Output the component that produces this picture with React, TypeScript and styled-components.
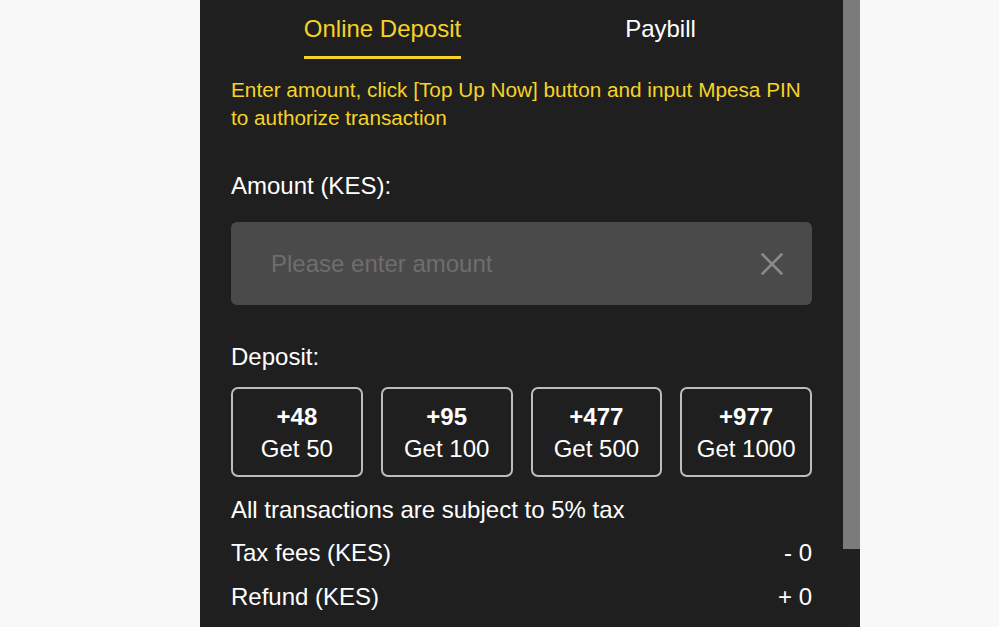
import React from "react";
import styled, { createGlobalStyle } from "styled-components";

const GlobalStyle = createGlobalStyle`
  html, body {
    margin: 0;
    padding: 0;
    background: #f8f8f8;
    font-family: "Liberation Sans", Arial, Helvetica, sans-serif;
  }
  * { box-sizing: border-box; }
`;

const Page = styled.div`
  width: 999px;
  height: 627px;
  overflow: hidden;
  padding-left: 200px;
`;

const Panel = styled.div`
  width: 660px;
  height: 627px;
  background: #1f1f1f;
  display: flex;
  flex-direction: row;
  overflow: hidden;
`;

const Content = styled.div`
  width: 643px;
  padding: 0 31px;
  display: flex;
  flex-direction: column;
  color: #ffffff;
`;

const ScrollTrack = styled.div`
  width: 17px;
  height: 100%;
  background: #202020;
  display: flex;
  flex-direction: column;
`;

const ScrollThumb = styled.div`
  width: 17px;
  height: 549px;
  background: #7b7b7b;
`;

const Tabs = styled.div`
  display: grid;
  grid-template-columns: 1fr 1fr;
  padding: 0 12.5px;
`;

const Tab = styled.div`
  display: flex;
  justify-content: center;
  padding-top: 15px;
`;

const TabLabel = styled.span<{ $active?: boolean }>`
  display: inline-block;
  font-size: 24px;
  line-height: 28px;
  padding-bottom: 13px;
  color: ${(p) => (p.$active ? "#f5d328" : "#ffffff")};
  border-bottom: 3px solid ${(p) => (p.$active ? "#f5d328" : "transparent")};
`;

const Notice = styled.p`
  margin: 17px 0 0;
  font-size: 20.75px;
  line-height: 27.5px;
  color: #f5d328;
`;

const Label = styled.div<{ $top: number }>`
  margin-top: ${(p) => p.$top}px;
  font-size: 24px;
  line-height: 28px;
  color: #ffffff;
`;

const InputBox = styled.div`
  margin-top: 22.3px;
  height: 83px;
  border-radius: 6px;
  background: #4a4a4a;
  display: flex;
  align-items: center;
  padding: 1px 29px 0 40px;
`;

const AmountInput = styled.input`
  flex: 1;
  min-width: 0;
  border: none;
  outline: none;
  background: transparent;
  font-family: "Liberation Sans", Arial, Helvetica, sans-serif;
  font-size: 24px;
  color: #ffffff;
  padding: 0;
  &::placeholder {
    color: #6e6e6e;
  }
`;

const ClearButton = styled.button`
  border: none;
  background: transparent;
  padding: 0;
  width: 22px;
  height: 22px;
  display: flex;
  align-items: center;
  justify-content: center;
  cursor: pointer;
`;

const Presets = styled.div`
  margin-top: 16px;
  display: grid;
  grid-template-columns: repeat(4, 1fr);
  gap: 18px;
`;

const Preset = styled.button`
  height: 90px;
  border: 2px solid #bdbdbd;
  border-radius: 7px;
  background: transparent;
  color: #ffffff;
  font-family: "Liberation Sans", Arial, Helvetica, sans-serif;
  display: flex;
  flex-direction: column;
  align-items: center;
  justify-content: center;
  padding: 1px 0 0;
  cursor: pointer;
`;

const PresetPay = styled.span`
  font-size: 24px;
  line-height: 32px;
  font-weight: 700;
`;

const PresetGet = styled.span`
  font-size: 24px;
  line-height: 32px;
`;

const Summary = styled.div`
  margin-top: 18.5px;
  display: flex;
  flex-direction: column;
  gap: 15.4px;
`;

const SummaryRow = styled.div`
  display: flex;
  justify-content: space-between;
  font-size: 24px;
  line-height: 28px;
  color: #ffffff;
`;

const presets = [
  { pay: 48, get: 50 },
  { pay: 95, get: 100 },
  { pay: 477, get: 500 },
  { pay: 977, get: 1000 },
];

export default function App() {
  return (
    <Page>
      <GlobalStyle />
      <Panel>
        <Content>
          <Tabs>
            <Tab>
              <TabLabel $active>Online Deposit</TabLabel>
            </Tab>
            <Tab>
              <TabLabel>Paybill</TabLabel>
            </Tab>
          </Tabs>
          <Notice>
            Enter amount, click [Top Up Now] button and input Mpesa PIN to authorize transaction
          </Notice>
          <Label $top={40.7}>Amount (KES):</Label>
          <InputBox>
            <AmountInput placeholder="Please enter amount" />
            <ClearButton aria-label="clear">
              <svg width="22" height="22" viewBox="0 0 22 22">
                <path
                  d="M1.5 1.5 L20.5 20.5 M20.5 1.5 L1.5 20.5"
                  stroke="#8a8a8a"
                  strokeWidth="2.6"
                  strokeLinecap="round"
                  fill="none"
                />
              </svg>
            </ClearButton>
          </InputBox>
          <Label $top={38.4}>Deposit:</Label>
          <Presets>
            {presets.map((p) => (
              <Preset key={p.pay}>
                <PresetPay>+{p.pay}</PresetPay>
                <PresetGet>Get {p.get}</PresetGet>
              </Preset>
            ))}
          </Presets>
          <Summary>
            <SummaryRow>
              <span>All transactions are subject to 5% tax</span>
            </SummaryRow>
            <SummaryRow>
              <span>Tax fees (KES)</span>
              <span>- 0</span>
            </SummaryRow>
            <SummaryRow>
              <span>Refund (KES)</span>
              <span>+ 0</span>
            </SummaryRow>
          </Summary>
        </Content>
        <ScrollTrack>
          <ScrollThumb />
        </ScrollTrack>
      </Panel>
    </Page>
  );
}
